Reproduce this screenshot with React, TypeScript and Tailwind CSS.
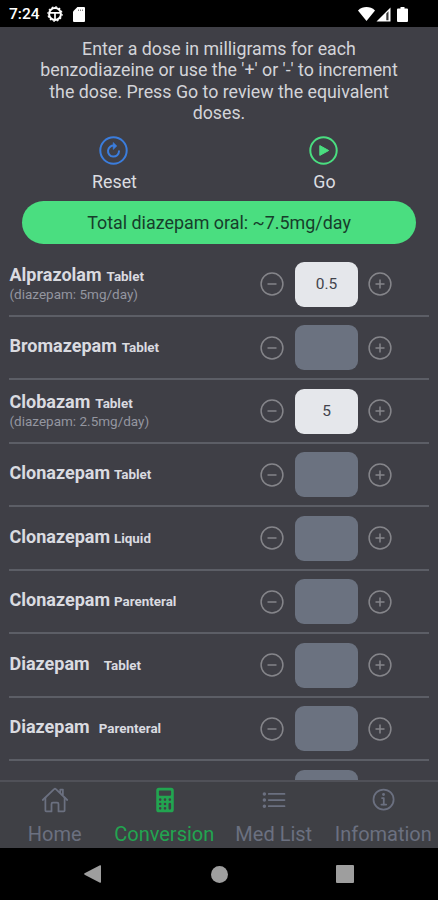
import { useState } from "react";
import type { ReactNode } from "react";
import clsx from "clsx";
import {
  IoCalculator,
  IoHomeOutline,
  IoInformationCircleOutline,
  IoListOutline,
} from "react-icons/io5";

type Medication = {
  id: number;
  name?: string;
  form?: string;
  gap?: string;
  step: number;
  ratio: number;
};

const medications: Medication[] = [
  { id: 1, name: "Alprazolam", form: "Tablet", gap: "ml-[5px]", step: 0.5, ratio: 10 },
  { id: 2, name: "Bromazepam", form: "Tablet", gap: "ml-[5px]", step: 1, ratio: 1 },
  { id: 3, name: "Clobazam", form: "Tablet", gap: "ml-[5px]", step: 5, ratio: 0.5 },
  { id: 4, name: "Clonazepam", form: "Tablet", gap: "ml-[4px]", step: 0.5, ratio: 20 },
  { id: 5, name: "Clonazepam", form: "Liquid", gap: "ml-[4px]", step: 0.5, ratio: 20 },
  { id: 6, name: "Clonazepam", form: "Parenteral", gap: "ml-[4px]", step: 0.5, ratio: 20 },
  { id: 7, name: "Diazepam", form: "Tablet", gap: "ml-[14px]", step: 1, ratio: 1 },
  { id: 8, name: "Diazepam", form: "Parenteral", gap: "ml-[9px]", step: 1, ratio: 1 },
  { id: 9, step: 1, ratio: 1 },
];

const initialDoses: Record<number, number> = { 1: 0.5, 3: 5 };

const StatusBar = () => (
  <div className="flex h-[27px] shrink-0 items-center bg-black pl-[9px] pr-[30px] pt-px text-white">
    <span className="mt-px text-[15.5px] font-medium leading-none">7:24</span>
    <svg className="ml-[7px] size-4" viewBox="0 0 16 16" fill="none" stroke="currentColor">
      <circle cx="8" cy="8" r="5.9" strokeWidth="2" />
      <circle cx="8" cy="8" r="7.1" strokeWidth="1.2" strokeDasharray="1.8 1.92" />
      <path d="M3 6.9h10M8 7v6" strokeWidth="1.7" />
    </svg>
    <svg className="ml-[10px] h-[15px] w-3" viewBox="0 0 12 15">
      <path d="M4.4 0H11a1 1 0 0 1 1 1v13a1 1 0 0 1-1 1H1a1 1 0 0 1-1-1V4.5z" fill="currentColor" />
      <path d="M5.5 2.5v1.5M7.5 2.5v1.5M9.5 2.5v1.5" stroke="#777" strokeWidth=".9" />
    </svg>
    <svg className="ml-auto h-[14px] w-[17px]" viewBox="0 0 17 14">
      <path d="M0 3.4C5-1 12-1 17 3.4L8.5 14z" fill="currentColor" />
    </svg>
    <svg className="ml-[1px] size-[15px]" viewBox="0 0 15 15">
      <path d="M14.5 .5v14H.5z" fill="currentColor" />
      <path d="M10.3 6.5v6.8h2.2V4.300z" fill="#3a3a3a" />
    </svg>
    <svg className="ml-[6px] h-[15px] w-[11px]" viewBox="0 0 11 15">
      <path d="M3.5 0h4v1.5H10a1 1 0 0 1 1 1V14a1 1 0 0 1-1 1H1a1 1 0 0 1-1-1V2.500a1 1 0 0 1 1-1h2.500z" fill="currentColor" />
    </svg>
  </div>
);

const ResetIcon = () => (
  <svg className="size-[29px] text-[#3b7ddd]" viewBox="0 0 29 29" fill="none" stroke="currentColor">
    <circle cx="14.5" cy="14.5" r="13.2" strokeWidth="2" />
    <path d="M15.6 9.7A5.5 5.5 0 1 0 20 15.2" strokeWidth="2" strokeLinecap="round" />
    <path d="M14.2 6.5l3.6 3.5-3.6 3.5z" fill="currentColor" strokeWidth=".6" strokeLinejoin="round" />
  </svg>
);

const GoIcon = () => (
  <svg className="size-[29px] text-[#4ade80]" viewBox="0 0 29 29" fill="none" stroke="currentColor">
    <circle cx="14.5" cy="14.5" r="13.2" strokeWidth="2" />
    <path d="M10.8 9.6v9.8l8.9-4.9z" fill="currentColor" strokeWidth="1" strokeLinejoin="round" />
  </svg>
);

const StepIcon = ({ plus = false }: { plus?: boolean }) => (
  <svg className="size-6 text-[#85858a]" viewBox="0 0 24 24" fill="none" stroke="currentColor">
    <circle cx="12" cy="12" r="10.9" strokeWidth="1.5" />
    <path d={plus ? "M7.5 12h9M12 7.5v9" : "M7.5 12h9"} strokeWidth="1.5" />
  </svg>
);

type ActionProps = {
  label: string;
  icon: ReactNode;
  onClick?: () => void;
};

const Action = ({ label, icon, onClick }: ActionProps) => (
  <button type="button" onClick={onClick} className="flex w-[210px] flex-col items-center">
    {icon}
    <span className="mt-[5px] ml-[3px] text-[17.8px] leading-[24px] text-[#dcdde1]">{label}</span>
  </button>
);

type MedicationRowProps = {
  medication: Medication;
  dose?: number;
  onChange: (dose: number) => void;
};

const MedicationRow = ({ medication, dose, onChange }: MedicationRowProps) => {
  const { name, form, gap, step, ratio } = medication;
  const current = dose ?? 0;

  return (
    <li className="flex h-[63.5px] shrink-0 items-center border-b-2 border-[#5c5e66]">
      <div className="mb-[1px] w-[251px] whitespace-nowrap pl-[0.5px]">
        {name && (
          <div className="flex items-baseline leading-[22px] text-[#dadbe0]">
            <span className="text-[18px] font-bold">{name}</span>
            <span className={clsx("text-[13.4px] font-bold", gap)}>{form}</span>
          </div>
        )}
        {dose ? (
          <div className="-mt-[2px] mb-[2px] text-[13.5px] leading-[16px] text-[#9496a0]">
            (diazepam: {dose * ratio}mg/day)
          </div>
        ) : null}
      </div>

      <button type="button" onClick={() => onChange(Math.max(0, current - step))}>
        <StepIcon />
      </button>
      <div
        className={clsx(
          "mr-[9.5px] ml-[11px] flex h-[45px] w-[63px] items-center justify-center rounded-[9px] pt-px text-[15.5px] text-[#42444c]",
          dose ? "bg-[#e5e7eb]" : "bg-[#6b7280]",
        )}
      >
        {dose || ""}
      </div>
      <button type="button" onClick={() => onChange(current + step)}>
        <StepIcon plus />
      </button>
    </li>
  );
};

const tabs = [
  { label: "Home", icon: IoHomeOutline },
  { label: "Conversion", icon: IoCalculator },
  { label: "Med List", icon: IoListOutline },
  { label: "Infomation", icon: IoInformationCircleOutline },
];

const App = () => {
  const [doses, setDoses] = useState(initialDoses);
  const [activeTab, setActiveTab] = useState("Conversion");

  const total = medications.reduce((acc, { id, ratio }) => acc + (doses[id] ?? 0) * ratio, 0);

  return (
    <div className="flex h-[900px] w-[438px] flex-col overflow-hidden bg-[#3f3f46] font-[Roboto,sans-serif]">
      <StatusBar />

      <main className="flex min-h-0 flex-1 flex-col overflow-hidden">
        <p className="mt-[11px] shrink-0 text-center text-[17.8px] leading-[21.3px] text-[#d3d4d9]">
          Enter a dose in milligrams for each
          <br />
          benzodiazeine or use the '+' or '-' to increment
          <br />
          the dose. Press Go to review the equivalent
          <br />
          doses.
        </p>

        <div className="mt-[12.8px] mr-[2px] flex shrink-0 justify-center">
          <Action label="Reset" icon={<ResetIcon />} onClick={() => setDoses({})} />
          <Action label="Go" icon={<GoIcon />} />
        </div>

        <div className="mx-[22px] mt-[7px] flex h-[43px] shrink-0 items-center justify-center rounded-full bg-[#4ade80] pt-px text-[17.9px] text-[#173d2b]">
          Total diazepam oral: ~{total}mg/day
        </div>

        <ul className="mx-[9px] mt-[9.5px] flex flex-col">
          {medications.map((medication) => (
            <MedicationRow
              key={medication.id}
              medication={medication}
              dose={doses[medication.id]}
              onChange={(dose) => setDoses({ ...doses, [medication.id]: dose })}
            />
          ))}
        </ul>
      </main>

      <nav className="grid h-[68px] shrink-0 grid-cols-4 border-t-2 border-[#505158] bg-[#3f4045]">
        {tabs.map(({ label, icon: Icon }) => (
          <button
            key={label}
            type="button"
            onClick={() => setActiveTab(label)}
            className={clsx(
              "flex flex-col items-center pt-[4px]",
              label === activeTab ? "text-[#22a550]" : "text-[#6b7080]",
            )}
          >
            <Icon size={28} className="ml-px" />
            <span className="mt-[8px] text-[20px] leading-[24px]">{label}</span>
          </button>
        ))}
      </nav>

      <div className="flex h-[52px] shrink-0 items-center bg-black pl-[84px] text-[#9e9e9e]">
        <svg className="h-[18px] w-[17px]" viewBox="0 0 17 18" fill="currentColor">
          <path d="M16 0.3Q17 0 17 1v16q0 1-1 .7L.6 9.7q-1-.7 0-1.4z" />
        </svg>
        <div className="ml-[110px] size-[17px] rounded-full bg-[#9e9e9e]" />
        <div className="ml-[108px] size-[18px] rounded-[1px] bg-[#9e9e9e]" />
      </div>
    </div>
  );
};

export default App;
